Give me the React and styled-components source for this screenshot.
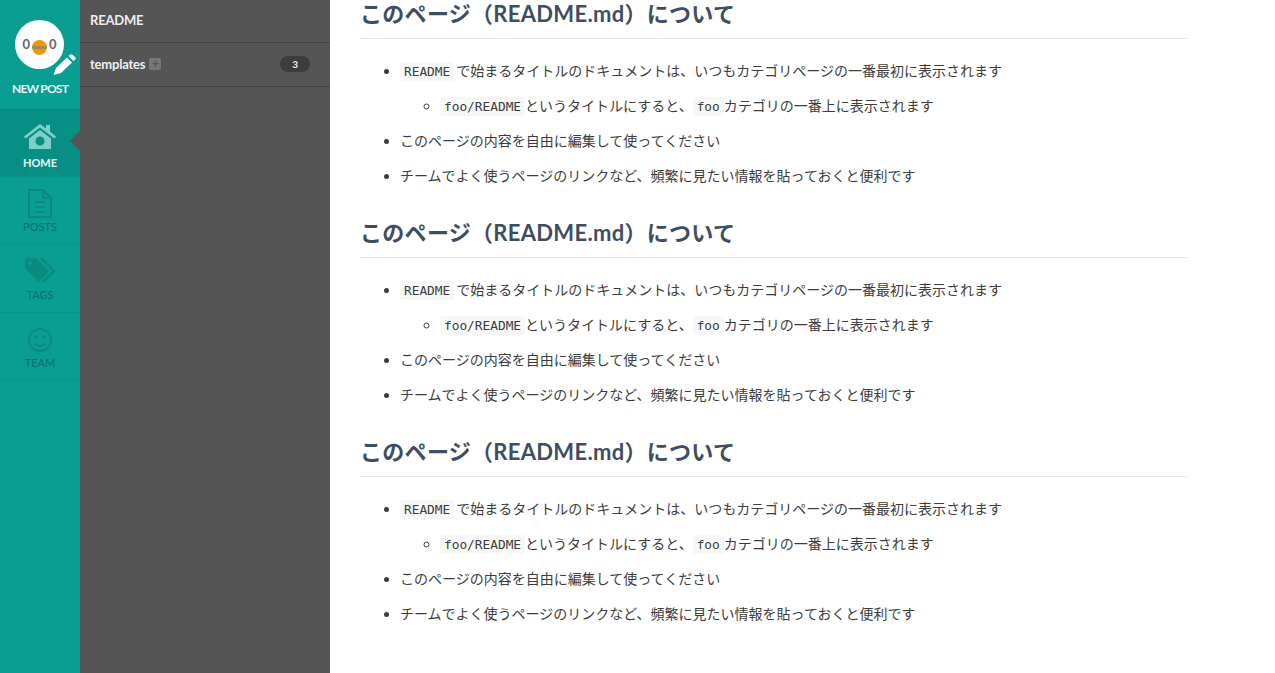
import React from "react";
import styled, { createGlobalStyle } from "styled-components";

const GlobalStyle = createGlobalStyle`
  html, body { margin: 0; padding: 0; height: 100%; background: #fff; overflow: hidden; }
  #root { height: 100%; }
  * { box-sizing: border-box; }
`;

const Page = styled.div`
  display: flex;
  height: 673px;
  font-family: Lato, "Noto Sans CJK JP", sans-serif;
`;

const NavBar = styled.nav`
  width: 80px;
  flex-shrink: 0;
  background: #0a9e93;
  display: flex;
  flex-direction: column;
`;

const NewPost = styled.div`
  height: 109px;
  padding-top: 20px;
  display: flex;
  flex-direction: column;
  align-items: center;
  color: #e6f6f4;
  font-size: 12px;
  font-weight: 700;
  letter-spacing: -0.8px;
`;

const LogoWrap = styled.div`
  position: relative;
  width: 49px;
  height: 49px;
  margin: 0 1px 12px 0;
`;

const Logo = styled.div`
  width: 49px;
  height: 49px;
  padding-bottom: 1px;
  border-radius: 50%;
  background: #fff;
  display: flex;
  align-items: center;
  justify-content: center;
  gap: 2px;
  color: #666;
  font-size: 13px;
  font-weight: 700;
  letter-spacing: 0;
`;

const Dot = styled.span`
  width: 15px;
  height: 15px;
  margin-top: 6px;
  border-radius: 50%;
  background: linear-gradient(#ea960f 0 38%, #a88a4c 38% 58%, #ea960f 58%);
`;

const Pencil = styled.svg`
  position: absolute;
  left: 38px;
  top: 34px;
  width: 23px;
  height: 22px;
`;

const NavItem = styled.div`
  height: ${(p) => p.$height || 68}px;
  position: relative;
  display: flex;
  flex-direction: column;
  align-items: center;
  padding-top: ${(p) => (p.$active ? 13 : 12)}px;
  border-top: 1px solid rgba(0, 0, 0, 0.06);
  background: ${(p) => (p.$active ? "#088f85" : "transparent")};
  color: ${(p) => (p.$active ? "#e6f6f4" : "#0b6f69")};
  font-size: 11px;
  font-weight: ${(p) => (p.$active ? 700 : 400)};

  &:last-child {
    height: 69px;
    border-bottom: 1px solid rgba(0, 0, 0, 0.06);
  }
`;

const ActiveArrow = styled.span`
  position: absolute;
  right: 0;
  top: 21px;
  border: 10px solid transparent;
  border-left: 0;
  border-right-color: #555;
`;

const NavIcon = styled.svg`
  width: 32px;
  height: 30px;
  margin-bottom: ${(p) => p.$gap || 1}px;
`;

const SidePanel = styled.aside`
  width: 250px;
  flex-shrink: 0;
  background: #555;
  color: #eee;
`;

const PanelRow = styled.div`
  height: ${(p) => p.$height}px;
  padding: 0 20px 2px 10px;
  display: flex;
  align-items: center;
  border-bottom: 1px solid #444;
  font-size: 13px;
  font-weight: 700;
  letter-spacing: -0.2px;
`;

const PlusBox = styled.span`
  width: 12px;
  height: 12px;
  margin-left: 4px;
  border-radius: 2px;
  background: #777;
  color: #555;
  display: flex;
  align-items: center;
  justify-content: center;
  font-size: 13px;
  line-height: 1;
`;

const Count = styled.span`
  margin-left: auto;
  width: 30px;
  height: 16px;
  border-radius: 8px;
  background: #3d3d3d;
  font-size: 10px;
  display: flex;
  align-items: center;
  justify-content: center;
`;

const Main = styled.main`
  flex: 1;
  padding: 0 88px 0 30px;
  color: #3d3d3d;
  overflow: hidden;
`;

const Section = styled.section`
  height: 219px;
`;

const Heading = styled.h2`
  margin: 0;
  height: 39px;
  padding: 0;
  line-height: 27px;
  font-size: 22px;
  font-weight: 700;
  letter-spacing: 0.3px;
  color: #3f4d62;
  border-bottom: 1px solid #e5e5e5;
`;

const List = styled.ul`
  margin: 14px 0 0;
  padding-left: 40px;
  font-size: 14px;
  list-style: disc;

  ul {
    margin: 0;
    padding-left: 40px;
    list-style: circle;
  }
`;

const Item = styled.li`
  line-height: 35px;
`;

const Line = styled.div`
  height: 35px;
`;

const Code = styled.code`
  font-family: "DejaVu Sans Mono", monospace;
  font-size: 12.8px;
  line-height: 1;
  padding: 2px 4px;
  margin-right: ${(p) => p.$gap || 0}px;
  border-radius: 3px;
  background: #f7f7f7;
`;

const HomeIcon = () => (
  <NavIcon viewBox="0 0 32 30" fill="#7fcfc9" $gap={3}>
    <path d="M16 1 L22 5.5 V2 H26 V8.5 L32 13.5 L30.5 15.5 L16 4.5 L1.5 15.5 L0 13.5 Z" />
    <path fillRule="evenodd" d="M16 7 L27 15.5 V26 H5 V15.5 Z M16 13.5 a4.5 4.5 0 1 0 0.01 0 Z" />
  </NavIcon>
);

const PostsIcon = () => (
  <NavIcon viewBox="0 0 32 30" fill="none" stroke="#0b8a80" strokeWidth="2">
    <path d="M5 1 H19 L27 9 V27 a1 1 0 0 1 -1 1 H6 a1 1 0 0 1 -1 -1 Z" />
    <path d="M19 1 V9 H27 M11 13 H21 M11 18 H21 M11 23 H21" />
  </NavIcon>
);

const TagsIcon = () => (
  <NavIcon viewBox="0 0 32 30">
    <path
      fill="#0b8a80"
      fillRule="evenodd"
      d="M3 1 H12 L25 14 L15 25 L1 11 V3 Z M6 4 a2 2 0 1 0 0.01 0 Z"
    />
    <path fill="none" stroke="#0b8a80" strokeWidth="2.5" d="M17 1 L30 14 L19 25" />
  </NavIcon>
);

const TeamIcon = () => (
  <NavIcon viewBox="0 0 32 30" fill="none" stroke="#0b8a80" strokeWidth="2">
    <circle cx="16" cy="15" r="11" />
    <path d="M10 18 Q16 24 22 18" />
    <circle cx="12" cy="12" r="1.5" fill="#0b8a80" stroke="none" />
    <circle cx="20" cy="12" r="1.5" fill="#0b8a80" stroke="none" />
  </NavIcon>
);

const ReadmeSection = () => (
  <Section>
    <Heading>このページ（README.md）について</Heading>
    <List>
      <Item>
        <Line>
          <Code $gap={2}>README</Code>で始まるタイトルのドキュメントは、いつもカテゴリページの一番最初に表示されます
        </Line>
        <ul>
          <Item>
            <Line>
              <Code>foo/README</Code>というタイトルにすると、<Code>foo</Code>カテゴリの一番上に表示されます
            </Line>
          </Item>
        </ul>
      </Item>
      <Item>
        <Line>このページの内容を自由に編集して使ってください</Line>
      </Item>
      <Item>
        <Line>チームでよく使うページのリンクなど、頻繁に見たい情報を貼っておくと便利です</Line>
      </Item>
    </List>
  </Section>
);

const App = () => {
  return (
    <Page>
      <GlobalStyle />
      <NavBar>
        <NewPost>
          <LogoWrap>
            <Logo>
              0<Dot />0
            </Logo>
            <Pencil viewBox="0 0 23 22" fill="#fff">
              <path d="M0.5 21 L3 14 L14 3.5 L19 8.5 L8 19 Z" />
              <path d="M15.5 2 L17 0.7 a2 2 0 0 1 2.5 0 L22 3 a1.6 1.6 0 0 1 0 2.5 L20.5 7 Z" />
            </Pencil>
          </LogoWrap>
          NEW POST
        </NewPost>
        <NavItem $active $height={67}>
          <HomeIcon />
          HOME
          <ActiveArrow />
        </NavItem>
        <NavItem>
          <PostsIcon />
          POSTS
        </NavItem>
        <NavItem>
          <TagsIcon />
          TAGS
        </NavItem>
        <NavItem>
          <TeamIcon />
          TEAM
        </NavItem>
      </NavBar>
      <SidePanel>
        <PanelRow $height={43}>README</PanelRow>
        <PanelRow $height={44}>
          templates
          <PlusBox>+</PlusBox>
          <Count>3</Count>
        </PanelRow>
      </SidePanel>
      <Main>
        <ReadmeSection />
        <ReadmeSection />
        <ReadmeSection />
      </Main>
    </Page>
  );
};

export default App;
